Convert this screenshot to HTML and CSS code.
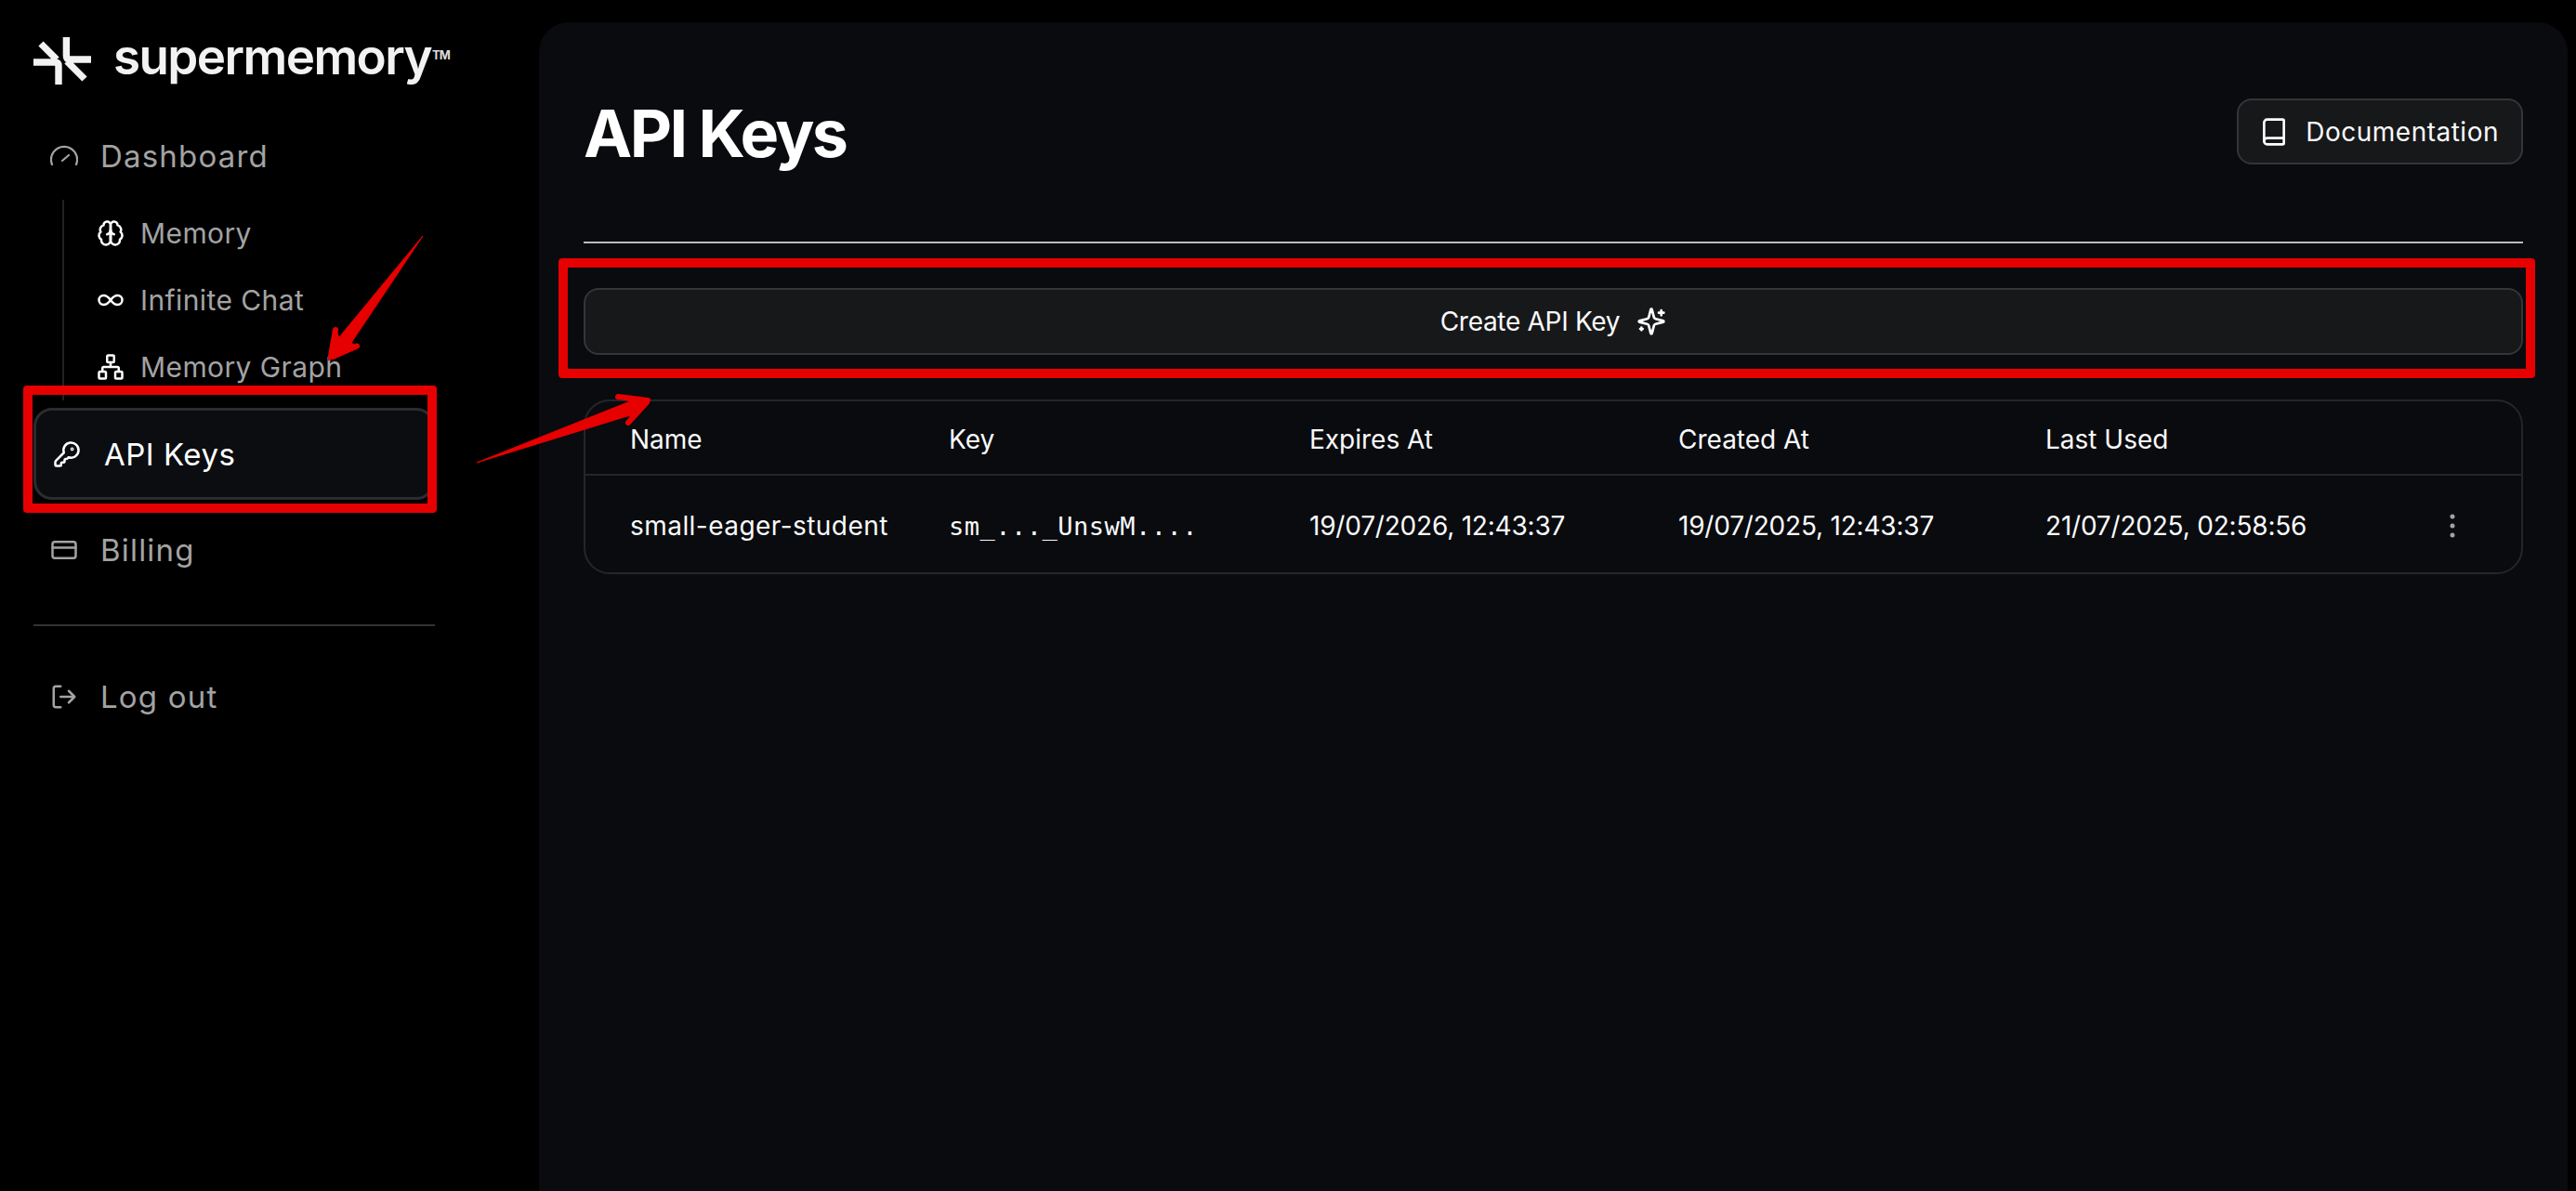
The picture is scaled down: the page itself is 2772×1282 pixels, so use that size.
FILE: index.html
```html
<!DOCTYPE html>
<html lang="en">
<head>
  <meta charset="UTF-8">
  <title>API Keys - supermemory</title>
  <link rel="stylesheet" href="styles.css">
</head>
<body>
  <aside class="sidebar">
    <div class="brand">
      <svg class="brand-mark" viewBox="0 0 64 52" fill="none" stroke="#f2f2f2" stroke-width="7.4">
        <path d="M0 27H23Q27 27 27 31V51M8 7L25 24M35.4 0V20Q35.4 24 39.4 24H62M36 26L55 45"/>
      </svg>
      <span class="brand-name">supermemory</span>
      <span class="brand-tm">TM</span>
    </div>

    <a class="nav-item">
      <svg class="nav-icon" viewBox="0 0 30 30" fill="none" stroke="currentColor" stroke-width="2.2" stroke-linecap="round">
        <path d="M2 24A14 14 0 1 1 28 24M13 20L20 14"/>
      </svg>
      Dashboard
    </a>
    <div class="subnav">
      <a class="sub-item">
        <svg class="sub-icon" viewBox="0 0 24 24" fill="none" stroke="#fff" stroke-width="2" stroke-linecap="round" stroke-linejoin="round">
          <path d="M12 5a3 3 0 1 0-5.997.125 4 4 0 0 0-2.526 5.77 4 4 0 0 0 .556 6.588A4 4 0 1 0 12 18Z"/>
          <path d="M12 5a3 3 0 1 1 5.997.125 4 4 0 0 1 2.526 5.77 4 4 0 0 1-.556 6.588A4 4 0 1 1 12 18Z"/>
          <path d="M15 13a4.5 4.5 0 0 1-3-4 4.5 4.5 0 0 1-3 4M12 9v9"/>
        </svg>
        Memory
      </a>
      <a class="sub-item">
        <svg class="sub-icon" viewBox="0 0 24 24" fill="none" stroke="#fff" stroke-width="2" stroke-linecap="round" stroke-linejoin="round">
          <path d="M12 12c-2-2.67-4-4-6-4a4 4 0 1 0 0 8c2 0 4-1.33 6-4Zm0 0c2 2.67 4 4 6 4a4 4 0 0 0 0-8c-2 0-4 1.33-6 4Z"/>
        </svg>
        Infinite Chat
      </a>
      <a class="sub-item">
        <svg class="sub-icon" viewBox="0 0 24 24" fill="none" stroke="#fff" stroke-width="2" stroke-linecap="round" stroke-linejoin="round">
          <rect x="16" y="16" width="6" height="6" rx="1"/>
          <rect x="2" y="16" width="6" height="6" rx="1"/>
          <rect x="9" y="2" width="6" height="6" rx="1"/>
          <path d="M5 16v-3a1 1 0 0 1 1-1h12a1 1 0 0 1 1 1v3M12 12V8"/>
        </svg>
        Memory Graph
      </a>
    </div>
    <a class="nav-item nav-item-active">
      <svg class="nav-icon" viewBox="0 0 24 24" fill="none" stroke="currentColor" stroke-width="2" stroke-linecap="round" stroke-linejoin="round">
        <path d="M2.586 17.414A2 2 0 0 0 2 18.828V21a1 1 0 0 0 1 1h3a1 1 0 0 0 1-1v-1a1 1 0 0 1 1-1h1a1 1 0 0 0 1-1v-1a1 1 0 0 1 1-1h.172a2 2 0 0 0 1.414-.586l.814-.814a6.5 6.5 0 1 0-4-4z"/>
        <circle cx="16.5" cy="7.5" r=".5"/>
      </svg>
      API Keys
    </a>
    <a class="nav-item nav-billing">
      <svg class="nav-icon" viewBox="0 0 24 24" fill="none" stroke="currentColor" stroke-width="2" stroke-linecap="round" stroke-linejoin="round">
        <rect x="2" y="5" width="20" height="14" rx="2"/>
        <path d="M2 10H22"/>
      </svg>
      Billing
    </a>
    <div class="nav-divider"></div>
    <a class="nav-item">
      <svg class="nav-icon" viewBox="0 0 24 24" fill="none" stroke="currentColor" stroke-width="2" stroke-linecap="round" stroke-linejoin="round">
        <path d="M9 21H5a2 2 0 0 1-2-2V5a2 2 0 0 1 2-2h4M16 17l5-5-5-5M21 12H9"/>
      </svg>
      Log out
    </a>
  </aside>

  <main class="panel">
    <header class="panel-header">
      <h1 class="panel-title">API Keys</h1>
      <button type="button" class="btn btn-doc">
        <svg class="btn-icon" viewBox="0 0 24 24" fill="none" stroke="#fff" stroke-width="2" stroke-linecap="round" stroke-linejoin="round">
          <path d="M4 19.5v-15A2.5 2.5 0 0 1 6.5 2H19a1 1 0 0 1 1 1v18a1 1 0 0 1-1 1H6.5a1 1 0 0 1 0-5H20"/>
        </svg>
        Documentation
      </button>
    </header>
    <div class="panel-rule"></div>

    <button type="button" class="btn btn-create">
      Create API Key
      <svg class="btn-icon" viewBox="0 0 24 24" fill="none" stroke="#fff" stroke-width="2" stroke-linecap="round" stroke-linejoin="round">
        <path d="M9.937 15.5A2 2 0 0 0 8.5 14.063l-6.135-1.582a.5.5 0 0 1 0-.962L8.5 9.936A2 2 0 0 0 9.937 8.5l1.582-6.135a.5.5 0 0 1 .963 0L14.063 8.5A2 2 0 0 0 15.5 9.937l6.135 1.581a.5.5 0 0 1 0 .964L15.5 14.063a2 2 0 0 0-1.437 1.437l-1.582 6.135a.5.5 0 0 1-.963 0z"/>
        <path d="M20 3v4M22 5h-4M4 17v2M5 18H3"/>
      </svg>
    </button>

    <div class="keys">
      <div class="keys-row keys-head">
        <span>Name</span>
        <span>Key</span>
        <span>Expires At</span>
        <span>Created At</span>
        <span>Last Used</span>
      </div>
      <div class="keys-row keys-body">
        <span class="key-name">small-eager-student</span>
        <span class="key-value">sm_..._UnswM....</span>
        <span class="key-date">19/07/2026, 12:43:37</span>
        <span class="key-date">19/07/2025, 12:43:37</span>
        <span class="key-date">21/07/2025, 02:58:56</span>
        <svg class="key-menu" viewBox="0 0 6 26" fill="#a3a3a3">
          <circle cx="3" cy="3" r="2.5"/>
          <circle cx="3" cy="13" r="2.5"/>
          <circle cx="3" cy="23" r="2.5"/>
        </svg>
      </div>
    </div>
  </main>

  <!-- red annotations on top of the screenshot -->
  <div class="mark mark-nav"></div>
  <div class="mark mark-create"></div>
  <svg class="arrows" viewBox="0 0 2772 1282">
    <path class="arrow-body" d="M455 254L365 363L361 355L353 388L384 373L378 369Z"/>
    <path class="arrow-barb" d="M361 355L356 383M384 372.5L358 384"/>
    <path class="arrow-body" d="M513 498L678 432L665 427L700 430L677 455L678 447Z"/>
    <path class="arrow-barb" d="M665 427L697 431M676 455L696 433"/>
  </svg>
</body>
</html>
```

FILE: styles.css
```css
* {
  box-sizing: border-box;
}
html, body {
  height: 100%;
}
body {
  margin: 0;
  display: flex;
  position: relative;
  overflow: hidden;
  background-color: #000;
  color: #fafafa;
  font-family: "Inter", "Liberation Sans", sans-serif;
}

/* sidebar */
.sidebar {
  width: 580px;
  flex-shrink: 0;
  padding: 40px 112px 0 36px;
}
.brand {
  display: flex;
  align-items: flex-start;
  height: 51px;
}
.brand-mark {
  width: 64px;
  height: 52px;
  flex-shrink: 0;
}
.brand-name {
  margin: -3px 0 0 22px;
  font-size: 53px;
  line-height: 48px;
  font-weight: 600;
  letter-spacing: -1.6px;
  color: #f2f2f2;
}
.brand-tm {
  margin: 11px 0 0 1px;
  font-size: 13px;
  font-weight: 700;
  letter-spacing: -1px;
  color: #ddd;
}
.nav-item {
  display: flex;
  align-items: center;
  gap: 24px;
  height: 44px;
  margin-top: 55px;
  padding-left: 18px;
  font-size: 33px;
  letter-spacing: 1.2px;
  color: #a3a3a3;
}
.nav-icon {
  width: 30px;
  height: 30px;
  flex-shrink: 0;
}
.subnav {
  margin: 25px 0 0 31px;
  height: 216px;
  border-left: 2px solid #222;
  padding-left: 35px;
}
.sub-item {
  display: flex;
  align-items: center;
  gap: 17px;
  height: 72px;
  font-size: 30px;
  letter-spacing: 0.4px;
  color: #a3a3a3;
}
.sub-icon {
  width: 30px;
  height: 30px;
  flex-shrink: 0;
}
.nav-item-active {
  height: 99px;
  margin-top: 8px;
  gap: 25px;
  border: 3px solid #2b2c30;
  border-radius: 20px;
  background-color: #0b0d11;
  letter-spacing: 0.5px;
  color: #fff;
}
.nav-billing {
  margin-top: 32px;
}
.nav-divider {
  height: 2px;
  margin-top: 58px;
  background-color: #333;
}
.nav-divider + .nav-item {
  margin-top: 54px;
}

/* main panel */
.panel {
  flex: 1;
  margin: 24px 9px 0 0;
  padding: 82px 48px 0;
  border-radius: 32px 32px 0 0;
  background-color: #090b0f;
}
.panel-header {
  display: flex;
  justify-content: space-between;
  align-items: center;
  height: 71px;
}
.panel-title {
  margin: 0;
  padding-top: 3px;
  font-size: 70px;
  font-weight: 700;
  letter-spacing: -2.6px;
  color: #fff;
}
.panel-rule {
  height: 2px;
  margin-top: 83px;
  background-color: #bbb;
}
.btn {
  display: flex;
  align-items: center;
  justify-content: center;
  border: 2px solid #333538;
  border-radius: 16px;
  background-color: #17181a;
  color: #fafafa;
  font-family: inherit;
  font-size: 28px;
}
.btn-icon {
  width: 32px;
  height: 32px;
  flex-shrink: 0;
}
.btn-doc {
  gap: 18px;
  height: 71px;
  padding: 0 24px 0 22px;
  letter-spacing: 0.5px;
}
.btn-create {
  gap: 18px;
  width: 100%;
  height: 72px;
  margin-top: 48px;
  letter-spacing: -0.3px;
}

/* keys table */
.keys {
  margin-top: 48px;
  border: 2px solid #24262a;
  border-radius: 28px;
  font-size: 28px;
}
.keys-row {
  display: grid;
  grid-template-columns: 343px 388px 397px 395px 435px 1fr;
  align-items: center;
  padding-left: 48px;
}
.keys-head {
  height: 80px;
  padding-top: 3px;
  border-bottom: 2px solid #24262a;
}
.keys-body {
  height: 104px;
  padding-top: 4px;
}
.key-name {
  letter-spacing: 0.45px;
}
.key-value {
  font-family: "DejaVu Sans Mono", "Liberation Mono", monospace;
  font-size: 27px;
  letter-spacing: 0.5px;
}
.key-date {
  letter-spacing: -0.2px;
}
.key-menu {
  width: 6px;
  height: 26px;
}

/* annotations */
.mark {
  position: absolute;
  border: 10px solid #e60000;
  border-radius: 4px;
}
.mark-nav {
  left: 25px;
  top: 415px;
  width: 445px;
  height: 137px;
}
.mark-create {
  left: 601px;
  top: 278px;
  width: 2127px;
  height: 129px;
}
.arrows {
  position: absolute;
  left: 0;
  top: 0;
  width: 2772px;
  height: 1282px;
}
.arrow-body {
  fill: #e60000;
  stroke: #e60000;
  stroke-width: 1;
}
.arrow-barb {
  fill: none;
  stroke: #e60000;
  stroke-width: 6;
  stroke-linecap: round;
}
```
